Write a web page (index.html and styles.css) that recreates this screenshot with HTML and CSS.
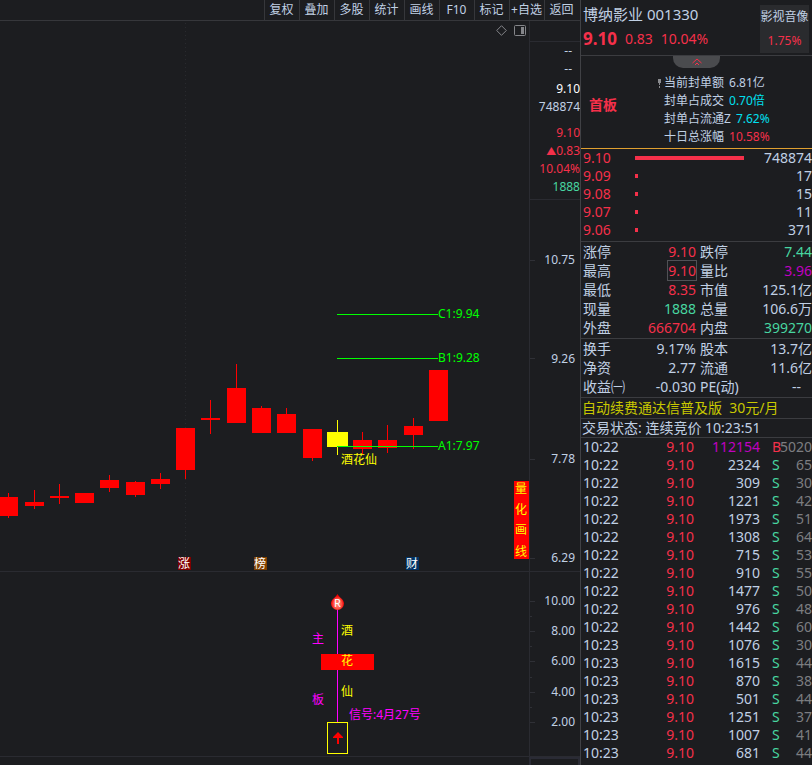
FILE: index.html
```html
<!DOCTYPE html>
<html lang="zh-CN">
<head>
    <meta charset="utf-8">
    <title>博纳影业 001330</title>
    <link rel="stylesheet" href="styles.css">
</head>
<body>
<div class="app">
    <main class="left">
        <nav class="toolbar">
            <button type="button">复权</button>
            <button type="button">叠加</button>
            <button type="button">多股</button>
            <button type="button">统计</button>
            <button type="button">画线</button>
            <button type="button">F10</button>
            <button type="button">标记</button>
            <button type="button">+自选</button>
            <button type="button">返回</button>
        </nav>

        <!-- K线主图 -->
        <section class="pane">
            <div class="plot">
                <svg viewBox="0 21 529 550">
                    <line class="dots" x1="185.5" y1="23" x2="185.5" y2="556"/>
                    <g class="candle">
                        <path d="M0 497h18v19H0zM8 493h1v25h-1z"/>
                        <path d="M25 502h19v4H25zM34 490h1v19h-1z"/>
                        <path d="M50 496h19v2H50zM59 484h1v20h-1z"/>
                        <path d="M75 493h19v10H75z"/>
                        <path d="M100 480h19v8h-19zM109 475h1v17h-1z"/>
                        <path d="M126 482h19v13h-19zM135 481h1v16h-1z"/>
                        <path d="M151 479h19v5h-19zM160 473h1v16h-1z"/>
                        <path d="M176 428h19v42h-19zM185 470h1v9h-1z"/>
                        <path d="M201 418h19v2h-19zM210 400h1v34h-1z"/>
                        <path d="M227 388h19v35h-19zM236 364h1v24h-1z"/>
                        <path d="M252 408h19v25h-19zM261 406h1v2h-1z"/>
                        <path d="M277 414h19v19h-19zM286 408h1v6h-1z"/>
                        <path d="M303 429h19v29h-19zM312 458h1v3h-1z"/>
                        <path class="signal" d="M327 432h21v15h-21zM337 420h1v35h-1z"/>
                        <path d="M353 440h19v9h-19zM362 432h1v22h-1z"/>
                        <path d="M378 440h19v8h-19zM387 425h1v28h-1z"/>
                        <path d="M404 426h19v9h-19zM413 418h1v31h-1z"/>
                        <path d="M429 370h19v51h-19z"/>
                    </g>
                    <g class="level">
                        <path d="M337 314h101v1H337zM337 358h101v1H337zM337 446h101v1H337z"/>
                        <text x="438" y="318">C1:9.94</text>
                        <text x="438" y="362">B1:9.28</text>
                        <text x="438" y="450">A1:7.97</text>
                    </g>
                    <text class="yellow" x="341" y="464">酒花仙</text>
                    <rect class="red" x="514" y="481" width="15" height="78"/>
                    <g class="yellow">
                        <text x="515" y="493">量</text>
                        <text x="515" y="514">化</text>
                        <text x="515" y="534">画</text>
                        <text x="515" y="556">线</text>
                    </g>
                    <rect x="178" y="557" width="13" height="13" fill="#800000"/>
                    <rect x="254" y="557" width="13" height="13" fill="#804000"/>
                    <rect x="406" y="557" width="13" height="13" fill="#003366"/>
                    <g class="white">
                        <text x="178" y="568">涨</text>
                        <text x="254" y="568">榜</text>
                        <text x="406" y="568">财</text>
                    </g>
                </svg>
                <div class="tools">
                    <button type="button" aria-label="标记点">
                        <svg width="11" height="11" viewBox="0 0 11 11"><path d="M5.5.7l4.8 4.8-4.8 4.8L.7 5.5z"/></svg>
                    </button>
                    <button type="button" aria-label="侧栏">
                        <svg width="12" height="11" viewBox="0 0 12 11"><rect x=".5" y=".5" width="11" height="10" rx="1"/><path class="solid" d="M7 2h3v7H7z"/></svg>
                    </button>
                </div>
            </div>
            <div class="axis">
                <div class="quote">
                    <p class="none">--</p>
                    <p class="none">--</p>
                    <p class="now">9.10</p>
                    <p>748874</p>
                    <p class="up gap">9.10</p>
                    <p class="up"><small>▲</small>0.83</p>
                    <p class="up">10.04%</p>
                    <p class="down">1888</p>
                </div>
                <svg class="scale" viewBox="530 200 50 371">
                    <path d="M530 260h5v1h-5zM530 358h5v1h-5zM530 459h5v1h-5zM530 558h5v1h-5z"/>
                    <text x="575" y="264">10.75</text>
                    <text x="575" y="363">9.26</text>
                    <text x="575" y="463">7.78</text>
                    <text x="575" y="562">6.29</text>
                </svg>
            </div>
        </section>

        <!-- 副图指标 -->
        <section class="pane">
            <div class="plot">
                <svg viewBox="0 572 529 184">
                    <defs>
                        <radialGradient id="drop" cx="50%" cy="62%" r="50%">
                            <stop offset="0" stop-color="#ff9080"/>
                            <stop offset="0.6" stop-color="#ff5548"/>
                            <stop offset="1" stop-color="#f00000"/>
                        </radialGradient>
                    </defs>
                    <rect class="magenta" x="337" y="609" width="1" height="113"/>
                    <path fill="url(#drop)" d="M337.500 594c1 3 6.500 5 6.500 9.500a6.500 6.500 0 0 1-13 0c0-4.500 5.500-6.500 6.500-9.500z"/>
                    <text class="badge" x="337.500" y="607">R</text>
                    <rect class="red" x="321" y="654" width="53" height="16"/>
                    <g class="yellow">
                        <text x="341" y="635">酒</text>
                        <text x="341" y="665">花</text>
                        <text x="341" y="696">仙</text>
                    </g>
                    <g class="magenta">
                        <text x="312" y="643">主</text>
                        <text x="312" y="704">板</text>
                        <text x="349" y="719">信号:4月27号</text>
                    </g>
                    <rect class="frame" x="327.500" y="722.500" width="20" height="31"/>
                    <path class="red" d="M338 732l5 5v1h-4v6h-2v-6h-4v-1z"/>
                </svg>
            </div>
            <div class="axis">
                <svg class="scale" viewBox="530 572 50 184">
                    <path d="M530 601h5v1h-5zM530 616h2v1h-2zM530 631h5v1h-5zM530 646h2v1h-2zM530 661h5v1h-5zM530 677h2v1h-2zM530 692h5v1h-5zM530 707h2v1h-2zM530 722h5v1h-5z"/>
                    <text x="575" y="605">10.00</text>
                    <text x="575" y="635">8.00</text>
                    <text x="575" y="665">6.00</text>
                    <text x="575" y="696">4.00</text>
                    <text x="575" y="726">2.00</text>
                </svg>
            </div>
        </section>
        <div class="pane foot">
            <div class="plot"></div>
            <div class="axis corner"></div>
        </div>
    </main>

    <aside class="side">
        <header class="head">
            <div>
                <h1>博纳影业 001330</h1>
                <div class="price up"><b>9.10</b><span>0.83</span><span>10.04%</span></div>
            </div>
            <a class="sector" href="#">影视音像<span class="up">1.75%</span></a>
        </header>

        <section class="limit">
            <button type="button" class="fold" aria-label="收起">
                <svg width="10" height="8" viewBox="0 0 10 8"><path d="M.5 5L5 1l4.500 4M3 7l2-2 2 2"/></svg>
            </button>
            <strong class="up">首板</strong>
            <ul>
                <li><svg class="mark" width="3" height="9" viewBox="0 0 3 9"><path d="M0 0h3v4H2v2H1V4H0zM1 7h1v2H1z"/></svg>当前封单额<span>6.81亿</span></li>
                <li>封单占成交<span class="cyan">0.70倍</span></li>
                <li>封单占流通Z<span class="cyan">7.62%</span></li>
                <li>十日总涨幅<span class="up">10.58%</span></li>
            </ul>
        </section>

        <table class="book">
            <tr><th>9.10</th><td class="bar"><i class="full"></i></td><td>748874</td></tr>
            <tr><th>9.09</th><td class="bar"><i></i></td><td>17</td></tr>
            <tr><th>9.08</th><td class="bar"><i></i></td><td>15</td></tr>
            <tr><th>9.07</th><td class="bar"><i></i></td><td>11</td></tr>
            <tr><th>9.06</th><td class="bar"><i></i></td><td>371</td></tr>
        </table>

        <table class="stats">
            <tr><th>涨停</th><td class="up">9.10</td><th>跌停</th><td class="down">7.44</td></tr>
            <tr><th>最高</th><td class="up"><span class="boxed">9.10</span></td><th>量比</th><td class="purple">3.96</td></tr>
            <tr><th>最低</th><td class="up">8.35</td><th>市值</th><td>125.1亿</td></tr>
            <tr><th>现量</th><td class="down">1888</td><th>总量</th><td>106.6万</td></tr>
            <tr><th>外盘</th><td class="up">666704</td><th>内盘</th><td class="down">399270</td></tr>
        </table>

        <table class="stats">
            <tr><th>换手</th><td>9.17%</td><th>股本</th><td>13.7亿</td></tr>
            <tr><th>净资</th><td>2.77</td><th>流通</th><td>11.6亿</td></tr>
            <tr><th>收益㈠</th><td>-0.030</td><th>PE(动)</th><td class="none">--</td></tr>
        </table>

        <a class="notice" href="#">自动续费通达信普及版&nbsp; 30元/月</a>
        <p class="status">交易状态: 连续竞价 10:23:51</p>

        <table class="ticks">
            <tr><td>10:22</td><td>9.10</td><td class="purple">112154</td><td class="buy">B</td><td>5020</td></tr>
            <tr><td>10:22</td><td>9.10</td><td>2324</td><td>S</td><td>65</td></tr>
            <tr><td>10:22</td><td>9.10</td><td>309</td><td>S</td><td>30</td></tr>
            <tr><td>10:22</td><td>9.10</td><td>1221</td><td>S</td><td>42</td></tr>
            <tr><td>10:22</td><td>9.10</td><td>1973</td><td>S</td><td>51</td></tr>
            <tr><td>10:22</td><td>9.10</td><td>1308</td><td>S</td><td>64</td></tr>
            <tr><td>10:22</td><td>9.10</td><td>715</td><td>S</td><td>53</td></tr>
            <tr><td>10:22</td><td>9.10</td><td>910</td><td>S</td><td>55</td></tr>
            <tr><td>10:22</td><td>9.10</td><td>1477</td><td>S</td><td>50</td></tr>
            <tr><td>10:22</td><td>9.10</td><td>976</td><td>S</td><td>48</td></tr>
            <tr><td>10:22</td><td>9.10</td><td>1442</td><td>S</td><td>60</td></tr>
            <tr><td>10:23</td><td>9.10</td><td>1076</td><td>S</td><td>30</td></tr>
            <tr><td>10:23</td><td>9.10</td><td>1615</td><td>S</td><td>44</td></tr>
            <tr><td>10:23</td><td>9.10</td><td>870</td><td>S</td><td>38</td></tr>
            <tr><td>10:23</td><td>9.10</td><td>501</td><td>S</td><td>44</td></tr>
            <tr><td>10:23</td><td>9.10</td><td>1251</td><td>S</td><td>37</td></tr>
            <tr><td>10:23</td><td>9.10</td><td>1007</td><td>S</td><td>41</td></tr>
            <tr><td>10:23</td><td>9.10</td><td>681</td><td>S</td><td>44</td></tr>
        </table>
    </aside>
</div>
</body>
</html>
```
FILE: styles.css
```css
*{
    box-sizing: border-box;
    margin: 0;
    padding: 0;
}
body{
    background-color: #1c1d20;
    color: #c0d0e4;
    font: 12px/18px "Noto Sans", "Noto Sans CJK SC", sans-serif;
}
button{
    border: none;
    background: none;
    color: inherit;
    font: inherit;
}
a{
    color: inherit;
    text-decoration: none;
}
svg{
    display: block;
}
ul{
    list-style: none;
}
table{
    width: 100%;
    table-layout: fixed;
    border-collapse: collapse;
}
th{
    font-weight: normal;
    text-align: left;
}
td{
    text-align: right;
}
th, td{
    white-space: nowrap;
}

.up{ color: #f5304a; }
.down{ color: #48d6a0; }
.cyan{ color: #00e0f0; }
.purple{ color: #c000c0; }

.app{
    display: flex;
    min-height: 100vh;
}
.left{
    flex: 1;
    min-width: 0;
    display: flex;
    flex-direction: column;
}

/* 顶部工具栏 */
.toolbar{
    display: flex;
    justify-content: flex-end;
    height: 21px;
    padding-right: 1px;
    border-bottom: 1px solid #36373b;
}
.toolbar button{
    width: 35px;
    padding-right: 1px;
    line-height: 20px;
    border-left: 1px solid #36373b;
    white-space: nowrap;
}

/* 图表 */
.pane{
    display: flex;
    border-bottom: 1px solid #2a2b31;
}
.plot{
    position: relative;
    flex: 1;
    min-width: 0;
}
.plot svg{
    width: 100%;
}
.axis{
    flex: 0 0 51px;
    border-left: 1px solid #2a2b31;
}
.foot{
    flex: 1;
    border-bottom: none;
}
.corner{
    border: 2px solid #2a2b35;
    border-bottom: none;
}
.candle, .red{ fill: #ff0000; }
.signal, .yellow{ fill: #ffff00; }
.level{ fill: #00ff00; }
.magenta{ fill: #ff00ff; }
.white{ fill: #ffffff; }
.frame{
    fill: none;
    stroke: #ffff00;
}
.badge{
    fill: #ffffff;
    font-size: 11px;
    text-anchor: middle;
}
.dots{
    stroke: #292a2e;
    stroke-dasharray: 1 3;
}
.tools{
    position: absolute;
    top: 4px;
    right: 3px;
    display: flex;
    gap: 7px;
}
.tools svg{
    width: auto;
    fill: none;
    stroke: #85868a;
}
.tools .solid{
    fill: #85868a;
    stroke: none;
}

/* 价格轴 */
.quote{
    margin-top: 20px;
    padding-bottom: 3px;
    border-top: 1px solid #2a2b31;
    border-bottom: 1px solid #2a2b31;
    text-align: right;
}
.quote .none{
    padding-right: 8px;
}
.quote .now{
    margin-top: 2px;
    color: #ffffff;
}
.quote .gap{
    margin-top: 8px;
}
.quote small{
    font-size: 10px;
}
.scale{
    width: 100%;
    fill: #2f3036;
}
.scale text{
    fill: #c0d0e4;
    text-anchor: end;
}

/* 右侧行情 */
.side{
    flex: 0 0 232px;
    min-width: 0;
    border-left: 1px solid #404145;
    font-size: 14px;
}
.head{
    display: flex;
    justify-content: space-between;
    height: 56px;
    padding: 5px 3px 2px 2px;
    border-bottom: 1px solid #3b3c40;
}
.head h1{
    font-size: 15px;
    font-weight: normal;
    line-height: 18px;
}
.price{
    display: flex;
    gap: 8px;
    line-height: 32px;
}
.price b{
    font-size: 17px;
}
.sector{
    width: 49px;
    background-color: #2a2b2e;
    font-size: 12px;
    line-height: 23px;
    text-align: center;
    white-space: nowrap;
}
.sector span{
    display: block;
    line-height: 25px;
}
.limit{
    position: relative;
    display: flex;
    align-items: center;
    height: 93px;
    padding: 6px 8px 0;
    border-bottom: 1px solid #e0a030;
}
.fold{
    position: absolute;
    top: 0;
    left: 40%;
    width: 47px;
    height: 12px;
    border-radius: 0 0 10px 10px;
    background-color: #4a4b4e;
}
.fold svg{
    margin: 0 auto;
    fill: none;
    stroke: #f5304a;
}
.limit ul{
    margin-left: 39px;
    padding-top: 9px;
    font-size: 12px;
}
.limit li{
    position: relative;
    padding-left: 8px;
}
.limit li span{
    margin-left: 5px;
}
.mark{
    position: absolute;
    top: 5px;
    left: 2px;
    fill: #8a8b8f;
}
.book, .stats{
    border-bottom: 1px solid #3b3c40;
}
.book th, .stats th{
    padding-left: 2px;
}
.book{
    line-height: 18px;
}
.book th{
    width: 54px;
    color: #f5304a;
}
.book .bar{
    width: 110px;
}
.book i{
    display: block;
    width: 3px;
    height: 4px;
    background-color: #f5304a;
}
.book .full{
    width: 109px;
}
.book tr:last-child > *{
    padding-bottom: 2px;
}
.stats tr:last-child > *{
    padding-bottom: 1px;
}
.stats{
    line-height: 19px;
}
.stats th{
    width: 49px;
}
.stats td{
    width: 66px;
}
.stats th + td + th{
    padding-left: 4px;
}
.stats th:nth-child(3){
    width: 54px;
}
.stats td:last-child{
    width: auto;
}
.stats .none{
    padding-right: 11px;
}
.boxed{
    outline: 1px solid #505156;
}
.notice, .status{
    display: block;
    padding-left: 1px;
    border-bottom: 1px solid #3b3c40;
    white-space: nowrap;
}
.notice{
    line-height: 20px;
    color: #c8c800;
}
.status{
    line-height: 18px;
}
.ticks{
    line-height: 18px;
}
.ticks td:first-child{
    width: 50px;
    padding-left: 2px;
    text-align: left;
}
.ticks td:nth-child(2){
    width: 63px;
    color: #f5304a;
}
.ticks td:nth-child(3){
    width: 66px;
}
.ticks td:nth-child(4){
    width: 20px;
    padding-left: 12px;
    text-align: left;
    color: #48d6a0;
}
.ticks td:nth-child(5){
    color: #7c7d80;
}
.ticks td.buy:nth-child(4){
    color: #f5304a;
}
```
